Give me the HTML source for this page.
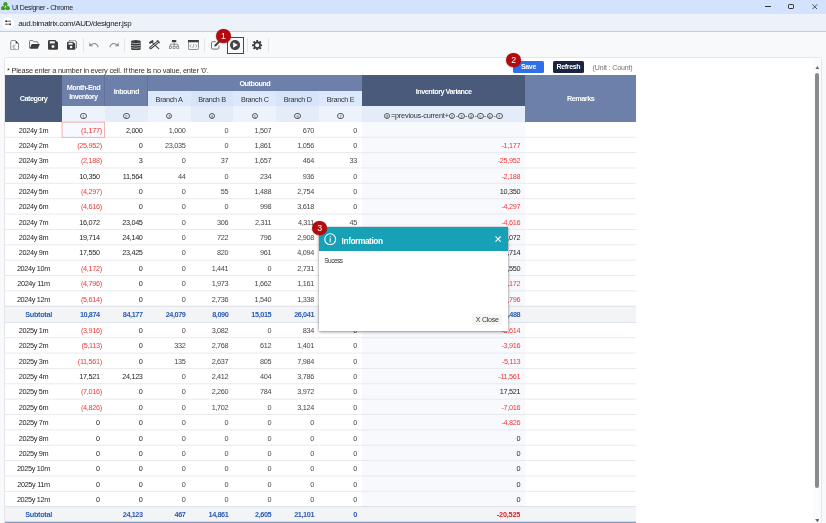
<!DOCTYPE html>
<html><head><meta charset="utf-8"><title>UI Designer</title>
<style>
html,body{margin:0;padding:0}
body{width:826px;height:523px;overflow:hidden;position:relative;background:#f8f9fb;font-family:"Liberation Sans",sans-serif;font-size:7.3px;color:#262626}
div,span,svg{position:absolute;box-sizing:border-box}
.t{white-space:nowrap;line-height:10px;height:10px;letter-spacing:-.32px}
.c{text-align:center}
.r{text-align:right}
.red{color:#f03a3a}
.g{color:#484848}
.blu{color:#2a5bb5;font-weight:bold;letter-spacing:-.42px}
.redb{color:#e02020;font-weight:bold;letter-spacing:-.2px}
.hw{color:#fff;font-weight:bold;letter-spacing:-.5px}
.hd{color:#333}
.ln{left:5px;width:631px;height:1px;background:#e9ebef}
.sub{left:5px;width:631px;background:#f3f4f7;border-top:1px solid #d9dee8;border-bottom:1px solid #d9dee8}
.sep{width:1px;top:38px;height:14px;background:#e4e5e8}
.badge{width:14.6px;height:14.6px;border-radius:50%;background:#b6090d;color:#fff;text-align:center;font-size:8.8px;line-height:15.6px;box-shadow:0 .5px 1.5px rgba(0,0,0,.35)}
.cn{width:6.5px;height:6.5px;border:.55px solid #5a5a5a;border-radius:50%;font-size:4.3px;line-height:5.4px;text-align:center;color:#555;letter-spacing:0}
</style></head><body><div style="left:0;top:0;width:826px;height:523px;overflow:hidden;will-change:transform;background:#f8f9fb">

<div style="left:0;top:0;width:826px;height:14px;background:#d3e3fd"></div>
<svg style="left:1.2px;top:1.6px" width="8.800" height="8.600" viewBox="0 0 17.600 17.200"><g fill="#3d9d20"><circle cx="8.800" cy="4.400" r="4.200"/><circle cx="4.300" cy="12.400" r="4.300"/><circle cx="13.300" cy="12.400" r="4.300"/><path d="M8.800 4L3.500 13h10.600z"/></g><path d="M8.800 6.600L6.600 11.400h1.300l.4-1h1l.4 1h1.300z" fill="#e6f3e0"/></svg>
<div class="t" style="left:12px;top:2.5px;font-size:7px;letter-spacing:-.36px;color:#222">UI Designer - Chrome</div>
<div style="left:765.2px;top:6.3px;width:5.4px;height:.9px;background:#333"></div>
<div style="left:788.2px;top:3.9px;width:5.6px;height:5.6px;border:.9px solid #333;border-radius:1.2px"></div>
<svg style="left:812px;top:3.9px" width="5.6" height="5.6" viewBox="0 0 10 10"><path d="M.6.6l8.8 8.8M9.400.6L.6 9.400" stroke="#333" stroke-width="1.5" fill="none"/></svg>
<div style="left:0;top:14px;width:826px;height:17.3px;background:#edf2fa"></div>
<div style="left:0;top:31.2px;width:826px;height:1px;background:#c9ccd2"></div>
<div style="left:2.2px;top:17px;width:11.8px;height:11.8px;border-radius:50%;background:#fff"></div>
<svg style="left:5px;top:20.200px" width="6.400" height="5.400" viewBox="0 0 12.800 10.800"><g stroke="#2c2c2c" stroke-width="1.500" fill="none"><path d="M5 2.400h7.800M0 8.400h7.800"/></g><circle cx="2.600" cy="2.400" r="2" fill="#2c2c2c"/><circle cx="10.200" cy="8.400" r="2" fill="#2c2c2c"/><path d="M0 2.400h1.200M11.600 8.400h1.200" stroke="#2c2c2c" stroke-width="1.500"/></svg>
<div class="t" style="left:18.2px;top:18.5px;font-size:8px;letter-spacing:-.36px;color:#222">aud.bimatrix.com/AUD/designer.jsp</div>
<svg style="left:10px;top:39.8px" width="9.200" height="10.400" viewBox="0 0 18 20"><path d="M1.500 2.500Q1.500 1 3 1h8l5.500 5.500V17.500q0 1.500-1.500 1.500H3q-1.500 0-1.500-1.500z" fill="#fff" stroke="#5a5a5a" stroke-width="1.400" stroke-linejoin="round"/><path d="M11 1v5.500h5.500z" fill="#3d3d3d"/><path d="M6 10h5M6 13h3.500M6 16h5M6 10v6" stroke="#808080" stroke-width="1.200" fill="none"/></svg>
<svg style="left:28.8px;top:40.3px" width="11" height="8.800" viewBox="0 0 22 17.600"><path d="M1 16V2.500Q1 1 2.500 1h5l2 2.500h7Q18 3.500 18 5v2.500" fill="none" stroke="#555" stroke-width="1.500"/><path d="M1.200 17.400L5.400 8.200h16.400l-4.200 9.200z" fill="#3d3d3d"/></svg>
<svg style="left:48.1px;top:39.9px" width="10" height="9.700" viewBox="0 0 20 19.400"><path d="M2.500 0h12L20 5v12q0 2.400-2.400 2.400H2.400Q0 19.400 0 17V2.400Q0 0 2.500 0z" fill="#3d3d3d"/><rect x="3.500" y="2.600" width="10" height="4.200" fill="#f8f9fb"/><circle cx="10" cy="13.200" r="3" fill="#f8f9fb"/></svg>
<svg style="left:67.4px;top:39.9px" width="9.800" height="9.700" viewBox="0 0 19.600 19.400"><path d="M4.500 2.500V2Q4.500 0 6.500 0h8.500l4.600 4.200V14q0 2-2 2h-.6" fill="none" stroke="#3d3d3d" stroke-width="1.600"/><path d="M2 3.400h10L16.500 7.500v9.900q0 2-2 2H2q-2 0-2-2V5.400Q0 3.400 2 3.400z" fill="#3d3d3d"/><rect x="3" y="5.600" width="8.200" height="3.600" fill="#f8f9fb"/><circle cx="8.200" cy="14.200" r="2.500" fill="#f8f9fb"/></svg>
<div class="sep" style="left:83.3px"></div>
<svg style="left:89.2px;top:42.2px" width="10" height="5.600" viewBox="0 0 20 11.200"><path d="M3.500 7.500Q8 2 12.500 3.200Q17 4.500 18.600 10.500" fill="none" stroke="#8f9092" stroke-width="2.200"/><path d="M.5.800v7.700h7.700z" fill="#8f9092"/></svg>
<svg style="left:108.8px;top:42.2px" width="10" height="5.600" viewBox="0 0 20 11.200"><g transform="translate(20 0) scale(-1 1)"><path d="M3.500 7.500Q8 2 12.500 3.200Q17 4.500 18.600 10.500" fill="none" stroke="#8f9092" stroke-width="2.200"/><path d="M.5.800v7.700h7.700z" fill="#8f9092"/></g></svg>
<div class="sep" style="left:124.1px"></div>
<svg style="left:130.8px;top:39.6px" width="9.800" height="10.400" viewBox="0 0 19.600 20.800"><path d="M0 3.400Q0 0 9.800 0T19.600 3.400V17.400Q19.600 20.800 9.800 20.800T0 17.400z" fill="#3d3d3d"/><g fill="none" stroke="#f8f9fb" stroke-width="1.100"><path d="M0 6.200Q9.800 8.600 19.600 6.200"/><path d="M0 10.800Q9.800 13.200 19.600 10.800"/><path d="M0 15.400Q9.800 17.800 19.600 15.400"/></g></svg>
<svg style="left:149.4px;top:40.2px" width="10.700" height="9.450" viewBox="0 0 147 130"><g fill="none" stroke-linecap="round"><path d="M78 68L134 119" stroke="#3d3d3d" stroke-width="15"/><path d="M22 108L122 27" stroke="#3d3d3d" stroke-width="37"/><path d="M24 106L120 29" stroke="#f8f9fb" stroke-width="13"/><path d="M6 44L58 9" stroke="#3d3d3d" stroke-width="27" stroke-linecap="butt"/><path d="M40 30L70 58" stroke="#3d3d3d" stroke-width="14"/><path d="M112 9L143 39" stroke="#3d3d3d" stroke-width="14"/></g></svg>
<svg style="left:169.4px;top:40.3px" width="10.200" height="9" viewBox="0 0 20.400 18"><rect x="5.800" y="0" width="8.800" height="4.400" fill="#3d3d3d"/><path d="M10.200 4.400v4M2.600 12V8.400h15.200V12M10.200 8.400V12" stroke="#6a6b6d" stroke-width="1.400" fill="none"/><g fill="none" stroke="#6a6b6d" stroke-width="1.300"><rect x=".7" y="12.400" width="4.200" height="4.600"/><rect x="8.100" y="12.400" width="4.200" height="4.600"/><rect x="15.500" y="12.400" width="4.200" height="4.600"/></g></svg>
<svg style="left:188.2px;top:39.9px" width="10.800" height="9.800" viewBox="0 0 21.600 19.600"><rect x=".8" y=".8" width="20" height="18" rx="1.200" fill="#fff" stroke="#6a6b6d" stroke-width="1.600"/><rect x="0" y="0" width="21.600" height="4.600" fill="#3d3d3d"/><path d="M6.500 8.800l-2.700 3 2.700 3M15.100 8.800l2.700 3-2.700 3M12 8l-2.400 7.600" stroke="#6a6b6d" stroke-width="1.400" fill="none"/></svg>
<div class="sep" style="left:204.2px"></div>
<svg style="left:211px;top:40px" width="9.600" height="9.600" viewBox="0 0 19.200 19.200"><path d="M9.500 3.400H3.200Q1 3.400 1 5.600V16q0 2.200 2.200 2.200h10.400q2.200 0 2.200-2.200V11" fill="none" stroke="#6a6b6d" stroke-width="1.900"/><path d="M6.500 13.200l.8-3.600L15.600 1.300l2.700 2.700L10 12.300z" fill="#3d3d3d"/></svg>
<div style="left:226.9px;top:36.9px;width:17.3px;height:17px;border:1.1px solid #f20000"></div>
<svg style="left:230.1px;top:39.9px" width="10.100" height="10.100" viewBox="0 0 20 20"><circle cx="10" cy="10" r="10" fill="#454545"/><path d="M6.200 4.600L15.600 10l-9.400 5.400z" fill="#fff"/></svg>
<div class="sep" style="left:246.6px"></div>
<svg style="left:251.8px;top:39.7px" width="10.400" height="10.400" viewBox="0 0 20 20"><g fill="#3d3d3d"><circle cx="10" cy="10" r="6.900"/><rect x="8.100" y="0" width="3.800" height="20" rx=".8"/><rect x="8.100" y="0" width="3.800" height="20" rx=".8" transform="rotate(45 10 10)"/><rect x="8.100" y="0" width="3.800" height="20" rx=".8" transform="rotate(90 10 10)"/><rect x="8.100" y="0" width="3.800" height="20" rx=".8" transform="rotate(135 10 10)"/></g><circle cx="10" cy="10" r="3.900" fill="#f8f9fb"/></svg>
<div class="sep" style="left:267.9px"></div>
<div style="left:4.4px;top:57px;width:817.4px;height:480px;background:#fff;border:1px solid #e4e6ea;border-radius:3px"></div>
<div class="t" style="left:7px;top:66px;font-size:7.4px;letter-spacing:-.22px;color:#333">* Please enter a number in every cell. If there is no value, enter '0'.</div>
<div class="t c" style="left:513.2px;top:61.4px;width:30.6px;height:11.5px;line-height:12.5px;background:#2f70ea;color:#fff;border-radius:1.500px;font-weight:bold;font-size:7px;letter-spacing:-.35px">Save</div>
<div class="t c" style="left:553.2px;top:61.4px;width:30.4px;height:11.5px;line-height:12.5px;background:#192542;color:#fff;border-radius:1.500px;font-weight:bold;font-size:7px;letter-spacing:-.35px">Refresh</div>
<div class="t" style="left:592.6px;top:62.5px;font-size:7px;letter-spacing:-.12px;color:#6f6f6f">(Unit : Count)</div>
<div style="left:5px;top:75px;width:57px;height:46.8px;background:#4a5a7a"></div>
<div style="left:62px;top:75px;width:85.71px;height:31.3px;background:#6c80a9"></div>
<div style="left:104.06px;top:75px;width:.8px;height:31.3px;background:#5f739c"></div>
<div style="left:147.71px;top:75px;width:214.29px;height:16px;background:#6c80a9"></div>
<div style="left:146.91px;top:75px;width:.8px;height:31.3px;background:#5f739c"></div>
<div style="left:62px;top:106.3px;width:42.86px;height:15.5px;background:#ecf3fd"></div>
<div style="left:104.86px;top:106.3px;width:42.86px;height:15.5px;background:#e3ecf8"></div>
<div style="left:147.71px;top:106.3px;width:42.86px;height:15.5px;background:#ecf3fd"></div>
<div style="left:190.57px;top:106.3px;width:42.86px;height:15.5px;background:#e3ecf8"></div>
<div style="left:233.43px;top:106.3px;width:42.86px;height:15.5px;background:#ecf3fd"></div>
<div style="left:276.29px;top:106.3px;width:42.86px;height:15.5px;background:#e3ecf8"></div>
<div style="left:319.14px;top:106.3px;width:42.86px;height:15.5px;background:#ecf3fd"></div>
<div style="left:147.71px;top:91px;width:42.86px;height:15.3px;background:#dce9fd"></div>
<div style="left:190.57px;top:91px;width:42.86px;height:15.3px;background:#d6e4fa"></div>
<div style="left:233.43px;top:91px;width:42.86px;height:15.3px;background:#dce9fd"></div>
<div style="left:276.29px;top:91px;width:42.86px;height:15.3px;background:#d6e4fa"></div>
<div style="left:319.14px;top:91px;width:42.86px;height:15.3px;background:#dce9fd"></div>
<div style="left:362px;top:75px;width:163.3px;height:31.3px;background:#4a5a7a"></div>
<div style="left:362px;top:106.3px;width:163.3px;height:15.5px;background:#e3ecf8"></div>
<div style="left:525.3px;top:75px;width:110.7px;height:46.8px;background:#6c80a9"></div>
<div class="t c hw" style="left:5px;width:57px;top:94.1px">Category</div>
<div class="t c hw" style="left:62px;width:42.86px;top:82.8px">Month-End</div>
<div class="t c hw" style="left:62px;width:42.86px;top:91.7px">Inventory</div>
<div class="t c hw" style="left:104.86px;width:42.86px;top:86.5px">Inbound</div>
<div class="t c hw" style="left:147.71px;width:214.29px;top:78.5px">Outbound</div>
<div class="t c hd" style="left:147.71px;width:42.86px;top:95px">Branch A</div>
<div class="t c hd" style="left:190.57px;width:42.86px;top:95px">Branch B</div>
<div class="t c hd" style="left:233.43px;width:42.86px;top:95px">Branch C</div>
<div class="t c hd" style="left:276.29px;width:42.86px;top:95px">Branch D</div>
<div class="t c hd" style="left:319.14px;width:42.86px;top:95px">Branch E</div>
<div class="t c hw" style="left:362px;width:163.3px;top:86.5px">Inventory Variance</div>
<div class="t c hw" style="left:525.3px;width:110.7px;top:94.1px">Remarks</div>
<div class="cn" style="left:80.18px;top:112.85px">1</div>
<div class="cn" style="left:123.04px;top:112.85px">2</div>
<div class="cn" style="left:165.89px;top:112.85px">3</div>
<div class="cn" style="left:208.75px;top:112.85px">4</div>
<div class="cn" style="left:251.61px;top:112.85px">5</div>
<div class="cn" style="left:294.46px;top:112.85px">6</div>
<div class="cn" style="left:337.32px;top:112.85px">7</div>
<div class="cn" style="left:383.95px;top:112.85px">8</div>
<div class="t hd" style="left:390.9px;top:111.3px;letter-spacing:-.19px">=previous-current+</div>
<div class="cn" style="left:448.75px;top:112.85px">2</div>
<div class="t hd c" style="left:455.2px;width:3.05px;top:111.3px">-</div>
<div class="cn" style="left:458.2px;top:112.85px">3</div>
<div class="t hd c" style="left:464.65px;width:3.05px;top:111.3px">-</div>
<div class="cn" style="left:467.65px;top:112.85px">4</div>
<div class="t hd c" style="left:474.1px;width:3.05px;top:111.3px">-</div>
<div class="cn" style="left:477.1px;top:112.85px">5</div>
<div class="t hd c" style="left:483.55px;width:3.05px;top:111.3px">-</div>
<div class="cn" style="left:486.55px;top:112.85px">6</div>
<div class="t hd c" style="left:493px;width:3.05px;top:111.3px">-</div>
<div class="cn" style="left:496px;top:112.85px">7</div>
<svg style="left:0;top:0" width="826" height="523" viewBox="0 0 826 523"><rect x="362" y="122" width="163.3" height="401" fill="#f8f9fd"/><rect x="5" y="136.76" width="631" height="1" fill="#e8eaee"/><rect x="5" y="152.12" width="631" height="1" fill="#e8eaee"/><rect x="5" y="167.48" width="631" height="1" fill="#e8eaee"/><rect x="5" y="182.84" width="631" height="1" fill="#e8eaee"/><rect x="5" y="198.2" width="631" height="1" fill="#e8eaee"/><rect x="5" y="213.56" width="631" height="1" fill="#e8eaee"/><rect x="5" y="228.92" width="631" height="1" fill="#e8eaee"/><rect x="5" y="244.28" width="631" height="1" fill="#e8eaee"/><rect x="5" y="259.64" width="631" height="1" fill="#e8eaee"/><rect x="5" y="275" width="631" height="1" fill="#e8eaee"/><rect x="5" y="290.36" width="631" height="1" fill="#e8eaee"/><rect x="5" y="337.21" width="631" height="1" fill="#e8eaee"/><rect x="5" y="352.57" width="631" height="1" fill="#e8eaee"/><rect x="5" y="367.93" width="631" height="1" fill="#e8eaee"/><rect x="5" y="383.29" width="631" height="1" fill="#e8eaee"/><rect x="5" y="398.65" width="631" height="1" fill="#e8eaee"/><rect x="5" y="414.01" width="631" height="1" fill="#e8eaee"/><rect x="5" y="429.37" width="631" height="1" fill="#e8eaee"/><rect x="5" y="444.73" width="631" height="1" fill="#e8eaee"/><rect x="5" y="460.09" width="631" height="1" fill="#e8eaee"/><rect x="5" y="475.45" width="631" height="1" fill="#e8eaee"/><rect x="5" y="490.81" width="631" height="1" fill="#e8eaee"/><rect x="5" y="306.2" width="631" height="16.150" fill="#f3f4f6"/><rect x="5" y="305.750" width="631" height="1" fill="#dbe0ea"/><rect x="5" y="321.9" width="631" height="1" fill="#dbe0ea"/><rect x="5" y="506.650" width="631" height="16" fill="#f3f4f6"/><rect x="5" y="506.150" width="631" height="1" fill="#dbe0ea"/><rect x="5" y="521.7" width="631" height="1.300" fill="#8598c2"/><rect x="62.1" y="122.1" width="42.400" height="15.300" fill="#f6f9fe" stroke="#f5b0b0" stroke-width="1"/></svg>
<div class="t c" style="left:5px;width:57px;top:125.55px">2024y 1m</div>
<div class="t r red" style="left:62px;width:39.86px;top:125.55px">(1,177)</div>
<div class="t r " style="left:104.86px;width:37.76px;top:125.55px">2,000</div>
<div class="t r g" style="left:147.71px;width:37.76px;top:125.55px">1,000</div>
<div class="t r g" style="left:190.57px;width:37.76px;top:125.55px">0</div>
<div class="t r g" style="left:233.43px;width:37.76px;top:125.55px">1,507</div>
<div class="t r g" style="left:276.29px;width:37.76px;top:125.55px">670</div>
<div class="t r g" style="left:319.14px;width:37.76px;top:125.55px">0</div>
<div class="t c" style="left:5px;width:57px;top:140.91px">2024y 2m</div>
<div class="t r red" style="left:62px;width:39.86px;top:140.91px">(25,952)</div>
<div class="t r " style="left:104.86px;width:37.76px;top:140.91px">0</div>
<div class="t r g" style="left:147.71px;width:37.76px;top:140.91px">23,035</div>
<div class="t r g" style="left:190.57px;width:37.76px;top:140.91px">0</div>
<div class="t r g" style="left:233.43px;width:37.76px;top:140.91px">1,861</div>
<div class="t r g" style="left:276.29px;width:37.76px;top:140.91px">1,056</div>
<div class="t r g" style="left:319.14px;width:37.76px;top:140.91px">0</div>
<div class="t r red" style="left:362px;width:158.2px;top:140.91px">-1,177</div>
<div class="t c" style="left:5px;width:57px;top:156.27px">2024y 3m</div>
<div class="t r red" style="left:62px;width:39.86px;top:156.27px">(2,188)</div>
<div class="t r " style="left:104.86px;width:37.76px;top:156.27px">3</div>
<div class="t r g" style="left:147.71px;width:37.76px;top:156.27px">0</div>
<div class="t r g" style="left:190.57px;width:37.76px;top:156.27px">37</div>
<div class="t r g" style="left:233.43px;width:37.76px;top:156.27px">1,657</div>
<div class="t r g" style="left:276.29px;width:37.76px;top:156.27px">464</div>
<div class="t r g" style="left:319.14px;width:37.76px;top:156.27px">33</div>
<div class="t r red" style="left:362px;width:158.2px;top:156.27px">-25,952</div>
<div class="t c" style="left:5px;width:57px;top:171.63px">2024y 4m</div>
<div class="t r " style="left:62px;width:37.76px;top:171.63px">10,350</div>
<div class="t r " style="left:104.86px;width:37.76px;top:171.63px">11,564</div>
<div class="t r g" style="left:147.71px;width:37.76px;top:171.63px">44</div>
<div class="t r g" style="left:190.57px;width:37.76px;top:171.63px">0</div>
<div class="t r g" style="left:233.43px;width:37.76px;top:171.63px">234</div>
<div class="t r g" style="left:276.29px;width:37.76px;top:171.63px">936</div>
<div class="t r g" style="left:319.14px;width:37.76px;top:171.63px">0</div>
<div class="t r red" style="left:362px;width:158.2px;top:171.63px">-2,188</div>
<div class="t c" style="left:5px;width:57px;top:186.99px">2024y 5m</div>
<div class="t r red" style="left:62px;width:39.86px;top:186.99px">(4,297)</div>
<div class="t r " style="left:104.86px;width:37.76px;top:186.99px">0</div>
<div class="t r g" style="left:147.71px;width:37.76px;top:186.99px">0</div>
<div class="t r g" style="left:190.57px;width:37.76px;top:186.99px">55</div>
<div class="t r g" style="left:233.43px;width:37.76px;top:186.99px">1,488</div>
<div class="t r g" style="left:276.29px;width:37.76px;top:186.99px">2,754</div>
<div class="t r g" style="left:319.14px;width:37.76px;top:186.99px">0</div>
<div class="t r " style="left:362px;width:158.2px;top:186.99px">10,350</div>
<div class="t c" style="left:5px;width:57px;top:202.35px">2024y 6m</div>
<div class="t r red" style="left:62px;width:39.86px;top:202.35px">(4,616)</div>
<div class="t r " style="left:104.86px;width:37.76px;top:202.35px">0</div>
<div class="t r g" style="left:147.71px;width:37.76px;top:202.35px">0</div>
<div class="t r g" style="left:190.57px;width:37.76px;top:202.35px">0</div>
<div class="t r g" style="left:233.43px;width:37.76px;top:202.35px">998</div>
<div class="t r g" style="left:276.29px;width:37.76px;top:202.35px">3,618</div>
<div class="t r g" style="left:319.14px;width:37.76px;top:202.35px">0</div>
<div class="t r red" style="left:362px;width:158.2px;top:202.35px">-4,297</div>
<div class="t c" style="left:5px;width:57px;top:217.71px">2024y 7m</div>
<div class="t r " style="left:62px;width:37.76px;top:217.71px">16,072</div>
<div class="t r " style="left:104.86px;width:37.76px;top:217.71px">23,045</div>
<div class="t r g" style="left:147.71px;width:37.76px;top:217.71px">0</div>
<div class="t r g" style="left:190.57px;width:37.76px;top:217.71px">306</div>
<div class="t r g" style="left:233.43px;width:37.76px;top:217.71px">2,311</div>
<div class="t r g" style="left:276.29px;width:37.76px;top:217.71px">4,311</div>
<div class="t r g" style="left:319.14px;width:37.76px;top:217.71px">45</div>
<div class="t r red" style="left:362px;width:158.2px;top:217.71px">-4,616</div>
<div class="t c" style="left:5px;width:57px;top:233.07px">2024y 8m</div>
<div class="t r " style="left:62px;width:37.76px;top:233.07px">19,714</div>
<div class="t r " style="left:104.86px;width:37.76px;top:233.07px">24,140</div>
<div class="t r g" style="left:147.71px;width:37.76px;top:233.07px">0</div>
<div class="t r g" style="left:190.57px;width:37.76px;top:233.07px">722</div>
<div class="t r g" style="left:233.43px;width:37.76px;top:233.07px">796</div>
<div class="t r g" style="left:276.29px;width:37.76px;top:233.07px">2,908</div>
<div class="t r g" style="left:319.14px;width:37.76px;top:233.07px">0</div>
<div class="t r " style="left:362px;width:158.2px;top:233.07px">16,072</div>
<div class="t c" style="left:5px;width:57px;top:248.43px">2024y 9m</div>
<div class="t r " style="left:62px;width:37.76px;top:248.43px">17,550</div>
<div class="t r " style="left:104.86px;width:37.76px;top:248.43px">23,425</div>
<div class="t r g" style="left:147.71px;width:37.76px;top:248.43px">0</div>
<div class="t r g" style="left:190.57px;width:37.76px;top:248.43px">820</div>
<div class="t r g" style="left:233.43px;width:37.76px;top:248.43px">961</div>
<div class="t r g" style="left:276.29px;width:37.76px;top:248.43px">4,094</div>
<div class="t r g" style="left:319.14px;width:37.76px;top:248.43px">0</div>
<div class="t r " style="left:362px;width:158.2px;top:248.43px">19,714</div>
<div class="t c" style="left:5px;width:57px;top:263.79px">2024y 10m</div>
<div class="t r red" style="left:62px;width:39.86px;top:263.79px">(4,172)</div>
<div class="t r " style="left:104.86px;width:37.76px;top:263.79px">0</div>
<div class="t r g" style="left:147.71px;width:37.76px;top:263.79px">0</div>
<div class="t r g" style="left:190.57px;width:37.76px;top:263.79px">1,441</div>
<div class="t r g" style="left:233.43px;width:37.76px;top:263.79px">0</div>
<div class="t r g" style="left:276.29px;width:37.76px;top:263.79px">2,731</div>
<div class="t r g" style="left:319.14px;width:37.76px;top:263.79px">0</div>
<div class="t r " style="left:362px;width:158.2px;top:263.79px">17,550</div>
<div class="t c" style="left:5px;width:57px;top:279.15px">2024y 11m</div>
<div class="t r red" style="left:62px;width:39.86px;top:279.15px">(4,796)</div>
<div class="t r " style="left:104.86px;width:37.76px;top:279.15px">0</div>
<div class="t r g" style="left:147.71px;width:37.76px;top:279.15px">0</div>
<div class="t r g" style="left:190.57px;width:37.76px;top:279.15px">1,973</div>
<div class="t r g" style="left:233.43px;width:37.76px;top:279.15px">1,662</div>
<div class="t r g" style="left:276.29px;width:37.76px;top:279.15px">1,161</div>
<div class="t r g" style="left:319.14px;width:37.76px;top:279.15px">0</div>
<div class="t r red" style="left:362px;width:158.2px;top:279.15px">-4,172</div>
<div class="t c" style="left:5px;width:57px;top:294.51px">2024y 12m</div>
<div class="t r red" style="left:62px;width:39.86px;top:294.51px">(5,614)</div>
<div class="t r " style="left:104.86px;width:37.76px;top:294.51px">0</div>
<div class="t r g" style="left:147.71px;width:37.76px;top:294.51px">0</div>
<div class="t r g" style="left:190.57px;width:37.76px;top:294.51px">2,736</div>
<div class="t r g" style="left:233.43px;width:37.76px;top:294.51px">1,540</div>
<div class="t r g" style="left:276.29px;width:37.76px;top:294.51px">1,338</div>
<div class="t r g" style="left:319.14px;width:37.76px;top:294.51px">0</div>
<div class="t r red" style="left:362px;width:158.2px;top:294.51px">-4,796</div>
<div class="t blu" style="left:25.2px;top:309.87px;letter-spacing:-.3px">Subtotal</div>
<div class="t r blu" style="left:62px;width:37.76px;top:309.87px">10,874</div>
<div class="t r blu" style="left:104.86px;width:37.76px;top:309.87px">84,177</div>
<div class="t r blu" style="left:147.71px;width:37.76px;top:309.87px">24,079</div>
<div class="t r blu" style="left:190.57px;width:37.76px;top:309.87px">8,090</div>
<div class="t r blu" style="left:233.43px;width:37.76px;top:309.87px">15,015</div>
<div class="t r blu" style="left:276.29px;width:37.76px;top:309.87px">26,041</div>
<div class="t r blu" style="left:319.14px;width:37.76px;top:309.87px">78</div>
<div class="t r blu" style="left:362px;width:158.2px;top:309.87px">16,488</div>
<div class="t c" style="left:5px;width:57px;top:326px">2025y 1m</div>
<div class="t r red" style="left:62px;width:39.86px;top:326px">(3,916)</div>
<div class="t r " style="left:104.86px;width:37.76px;top:326px">0</div>
<div class="t r g" style="left:147.71px;width:37.76px;top:326px">0</div>
<div class="t r g" style="left:190.57px;width:37.76px;top:326px">3,082</div>
<div class="t r g" style="left:233.43px;width:37.76px;top:326px">0</div>
<div class="t r g" style="left:276.29px;width:37.76px;top:326px">834</div>
<div class="t r g" style="left:319.14px;width:37.76px;top:326px">0</div>
<div class="t r red" style="left:362px;width:158.2px;top:326px">-5,614</div>
<div class="t c" style="left:5px;width:57px;top:341.36px">2025y 2m</div>
<div class="t r red" style="left:62px;width:39.86px;top:341.36px">(5,113)</div>
<div class="t r " style="left:104.86px;width:37.76px;top:341.36px">0</div>
<div class="t r g" style="left:147.71px;width:37.76px;top:341.36px">332</div>
<div class="t r g" style="left:190.57px;width:37.76px;top:341.36px">2,768</div>
<div class="t r g" style="left:233.43px;width:37.76px;top:341.36px">612</div>
<div class="t r g" style="left:276.29px;width:37.76px;top:341.36px">1,401</div>
<div class="t r g" style="left:319.14px;width:37.76px;top:341.36px">0</div>
<div class="t r red" style="left:362px;width:158.2px;top:341.36px">-3,916</div>
<div class="t c" style="left:5px;width:57px;top:356.72px">2025y 3m</div>
<div class="t r red" style="left:62px;width:39.86px;top:356.72px">(11,561)</div>
<div class="t r " style="left:104.86px;width:37.76px;top:356.72px">0</div>
<div class="t r g" style="left:147.71px;width:37.76px;top:356.72px">135</div>
<div class="t r g" style="left:190.57px;width:37.76px;top:356.72px">2,637</div>
<div class="t r g" style="left:233.43px;width:37.76px;top:356.72px">805</div>
<div class="t r g" style="left:276.29px;width:37.76px;top:356.72px">7,984</div>
<div class="t r g" style="left:319.14px;width:37.76px;top:356.72px">0</div>
<div class="t r red" style="left:362px;width:158.2px;top:356.72px">-5,113</div>
<div class="t c" style="left:5px;width:57px;top:372.08px">2025y 4m</div>
<div class="t r " style="left:62px;width:37.76px;top:372.08px">17,521</div>
<div class="t r " style="left:104.86px;width:37.76px;top:372.08px">24,123</div>
<div class="t r g" style="left:147.71px;width:37.76px;top:372.08px">0</div>
<div class="t r g" style="left:190.57px;width:37.76px;top:372.08px">2,412</div>
<div class="t r g" style="left:233.43px;width:37.76px;top:372.08px">404</div>
<div class="t r g" style="left:276.29px;width:37.76px;top:372.08px">3,786</div>
<div class="t r g" style="left:319.14px;width:37.76px;top:372.08px">0</div>
<div class="t r red" style="left:362px;width:158.2px;top:372.08px">-11,561</div>
<div class="t c" style="left:5px;width:57px;top:387.44px">2025y 5m</div>
<div class="t r red" style="left:62px;width:39.86px;top:387.44px">(7,016)</div>
<div class="t r " style="left:104.86px;width:37.76px;top:387.44px">0</div>
<div class="t r g" style="left:147.71px;width:37.76px;top:387.44px">0</div>
<div class="t r g" style="left:190.57px;width:37.76px;top:387.44px">2,260</div>
<div class="t r g" style="left:233.43px;width:37.76px;top:387.44px">784</div>
<div class="t r g" style="left:276.29px;width:37.76px;top:387.44px">3,972</div>
<div class="t r g" style="left:319.14px;width:37.76px;top:387.44px">0</div>
<div class="t r " style="left:362px;width:158.2px;top:387.44px">17,521</div>
<div class="t c" style="left:5px;width:57px;top:402.8px">2025y 6m</div>
<div class="t r red" style="left:62px;width:39.86px;top:402.8px">(4,826)</div>
<div class="t r " style="left:104.86px;width:37.76px;top:402.8px">0</div>
<div class="t r g" style="left:147.71px;width:37.76px;top:402.8px">0</div>
<div class="t r g" style="left:190.57px;width:37.76px;top:402.8px">1,702</div>
<div class="t r g" style="left:233.43px;width:37.76px;top:402.8px">0</div>
<div class="t r g" style="left:276.29px;width:37.76px;top:402.8px">3,124</div>
<div class="t r g" style="left:319.14px;width:37.76px;top:402.8px">0</div>
<div class="t r red" style="left:362px;width:158.2px;top:402.8px">-7,016</div>
<div class="t c" style="left:5px;width:57px;top:418.16px">2025y 7m</div>
<div class="t r " style="left:62px;width:37.76px;top:418.16px">0</div>
<div class="t r " style="left:104.86px;width:37.76px;top:418.16px">0</div>
<div class="t r g" style="left:147.71px;width:37.76px;top:418.16px">0</div>
<div class="t r g" style="left:190.57px;width:37.76px;top:418.16px">0</div>
<div class="t r g" style="left:233.43px;width:37.76px;top:418.16px">0</div>
<div class="t r g" style="left:276.29px;width:37.76px;top:418.16px">0</div>
<div class="t r g" style="left:319.14px;width:37.76px;top:418.16px">0</div>
<div class="t r red" style="left:362px;width:158.2px;top:418.16px">-4,826</div>
<div class="t c" style="left:5px;width:57px;top:433.52px">2025y 8m</div>
<div class="t r " style="left:62px;width:37.76px;top:433.52px">0</div>
<div class="t r " style="left:104.86px;width:37.76px;top:433.52px">0</div>
<div class="t r g" style="left:147.71px;width:37.76px;top:433.52px">0</div>
<div class="t r g" style="left:190.57px;width:37.76px;top:433.52px">0</div>
<div class="t r g" style="left:233.43px;width:37.76px;top:433.52px">0</div>
<div class="t r g" style="left:276.29px;width:37.76px;top:433.52px">0</div>
<div class="t r g" style="left:319.14px;width:37.76px;top:433.52px">0</div>
<div class="t r " style="left:362px;width:158.2px;top:433.52px">0</div>
<div class="t c" style="left:5px;width:57px;top:448.88px">2025y 9m</div>
<div class="t r " style="left:62px;width:37.76px;top:448.88px">0</div>
<div class="t r " style="left:104.86px;width:37.76px;top:448.88px">0</div>
<div class="t r g" style="left:147.71px;width:37.76px;top:448.88px">0</div>
<div class="t r g" style="left:190.57px;width:37.76px;top:448.88px">0</div>
<div class="t r g" style="left:233.43px;width:37.76px;top:448.88px">0</div>
<div class="t r g" style="left:276.29px;width:37.76px;top:448.88px">0</div>
<div class="t r g" style="left:319.14px;width:37.76px;top:448.88px">0</div>
<div class="t r " style="left:362px;width:158.2px;top:448.88px">0</div>
<div class="t c" style="left:5px;width:57px;top:464.24px">2025y 10m</div>
<div class="t r " style="left:62px;width:37.76px;top:464.24px">0</div>
<div class="t r " style="left:104.86px;width:37.76px;top:464.24px">0</div>
<div class="t r g" style="left:147.71px;width:37.76px;top:464.24px">0</div>
<div class="t r g" style="left:190.57px;width:37.76px;top:464.24px">0</div>
<div class="t r g" style="left:233.43px;width:37.76px;top:464.24px">0</div>
<div class="t r g" style="left:276.29px;width:37.76px;top:464.24px">0</div>
<div class="t r g" style="left:319.14px;width:37.76px;top:464.24px">0</div>
<div class="t r " style="left:362px;width:158.2px;top:464.24px">0</div>
<div class="t c" style="left:5px;width:57px;top:479.6px">2025y 11m</div>
<div class="t r " style="left:62px;width:37.76px;top:479.6px">0</div>
<div class="t r " style="left:104.86px;width:37.76px;top:479.6px">0</div>
<div class="t r g" style="left:147.71px;width:37.76px;top:479.6px">0</div>
<div class="t r g" style="left:190.57px;width:37.76px;top:479.6px">0</div>
<div class="t r g" style="left:233.43px;width:37.76px;top:479.6px">0</div>
<div class="t r g" style="left:276.29px;width:37.76px;top:479.6px">0</div>
<div class="t r g" style="left:319.14px;width:37.76px;top:479.6px">0</div>
<div class="t r " style="left:362px;width:158.2px;top:479.6px">0</div>
<div class="t c" style="left:5px;width:57px;top:494.96px">2025y 12m</div>
<div class="t r " style="left:62px;width:37.76px;top:494.96px">0</div>
<div class="t r " style="left:104.86px;width:37.76px;top:494.96px">0</div>
<div class="t r g" style="left:147.71px;width:37.76px;top:494.96px">0</div>
<div class="t r g" style="left:190.57px;width:37.76px;top:494.96px">0</div>
<div class="t r g" style="left:233.43px;width:37.76px;top:494.96px">0</div>
<div class="t r g" style="left:276.29px;width:37.76px;top:494.96px">0</div>
<div class="t r g" style="left:319.14px;width:37.76px;top:494.96px">0</div>
<div class="t r " style="left:362px;width:158.2px;top:494.96px">0</div>
<div class="t blu" style="left:25.2px;top:510.32px;letter-spacing:-.3px">Subtotal</div>
<div class="t r blu" style="left:104.86px;width:37.76px;top:510.32px">24,123</div>
<div class="t r blu" style="left:147.71px;width:37.76px;top:510.32px">467</div>
<div class="t r blu" style="left:190.57px;width:37.76px;top:510.32px">14,861</div>
<div class="t r blu" style="left:233.43px;width:37.76px;top:510.32px">2,605</div>
<div class="t r blu" style="left:276.29px;width:37.76px;top:510.32px">21,101</div>
<div class="t r blu" style="left:319.14px;width:37.76px;top:510.32px">0</div>
<div class="t r redb" style="left:362px;width:158.2px;top:510.32px">-20,525</div>
<div style="left:813px;top:58px;width:7.600px;height:465px;background:#fbfbfb"></div>
<svg style="left:814.7px;top:65.8px" width="4.800" height="3.400" viewBox="0 0 10 7.500"><path d="M5 0L10 7.500H0z" fill="#6b6b6b"/></svg>
<div style="left:814.9px;top:72.5px;width:4.300px;height:415.8px;background:#8b8b8b;border-radius:2.150px"></div>
<svg style="left:814.7px;top:519px" width="4.800" height="3.400" viewBox="0 0 10 7.500"><path d="M0 0h10L5 7.500z" fill="#6b6b6b"/></svg>
<div style="left:319.2px;top:227.4px;width:189.2px;height:103.2px;background:#fff;box-shadow:0 1px 3px rgba(0,0,0,.4),0 0 1px rgba(0,0,0,.3)"></div>
<div style="left:319.2px;top:227.4px;width:189.2px;height:23.7px;background:#17a0b6"></div>
<svg style="left:324.3px;top:233px" width="12.400" height="12.400" viewBox="0 0 24 24"><circle cx="12" cy="12" r="10.500" fill="none" stroke="#fff" stroke-width="2.100"/><rect x="11" y="10" width="2" height="8" fill="#fff"/><rect x="11" y="6.200" width="2" height="2.200" fill="#fff"/></svg>
<div class="t" style="left:341.6px;top:235.8px;font-size:8.3px;font-weight:bold;color:#fff;letter-spacing:-.42px">Information</div>
<svg style="left:494.8px;top:236.2px" width="6.200" height="6.200" viewBox="0 0 10 10"><path d="M.8.800l8.400 8.400M9.200.8L.8 9.200" stroke="#fff" stroke-width="1.700" fill="none"/></svg>
<div class="t" style="left:324.2px;top:256.2px;font-size:6.500px;letter-spacing:-.5px;color:#333">Sucess</div>
<div class="t c" style="left:472.2px;top:313.6px;width:30px;height:11.2px;line-height:11.2px;background:#f5f5f5;border-radius:1.500px;font-size:7px;letter-spacing:-.25px;color:#333">X Close</div>
<div class="badge" style="left:216.2px;top:28.6px">1</div>
<div class="badge" style="left:506.3px;top:52.5px">2</div>
<div class="badge" style="left:312.3px;top:220.5px">3</div>
</div></body></html>
